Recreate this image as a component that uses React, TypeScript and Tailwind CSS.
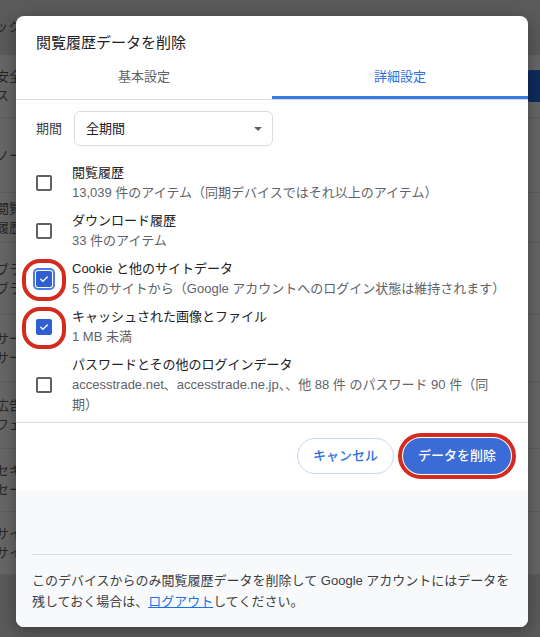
import type { ReactNode } from "react";

const BG_ROWS = [
  { h: "h-[63px]", lines: ["安全", "ス"], button: true },
  { h: "h-[75px]", lines: ["ノー"] },
  { h: "h-[50px]", lines: ["閲覧", "履歴"] },
  { h: "h-[72px]", lines: ["ブラ", "ブラ"] },
  { h: "h-[67px]", lines: ["サー", "サー"] },
  { h: "h-[67px]", lines: ["広告", "フェ"] },
  { h: "h-[63px]", lines: ["セキ", "セー"] },
  { h: "h-[63px]", lines: ["サイ", "サイ"] },
];

function BackgroundPage() {
  return (
    <div className="flex h-full flex-col">
      <div className="flex h-[55px] items-start pt-[17px]">
        <p className="-ml-[5px] text-[13px] leading-5 text-[#262626]">ックアップ</p>
      </div>
      <div className="flex flex-col bg-[#676767]">
        {BG_ROWS.map((row, i) => (
          <div
            key={i}
            className={`flex ${row.h} items-center justify-between border-b border-[#5e5e5e]`}
          >
            <div className="-ml-[4px] text-[13px] leading-[19px] text-[#262626]">
              {row.lines.map((l, j) => (
                <p key={j}>{l}</p>
              ))}
            </div>
            {row.button && <div className="-mr-[30px] h-8 w-[43px] rounded bg-[#0d2c5e]" />}
          </div>
        ))}
      </div>
    </div>
  );
}

function RedRing({ className }: { className: string }) {
  return <div className={`pointer-events-none absolute border-4 border-[#d52b1e] ${className}`} />;
}

function Checkbox({ checked, focused, marked }: { checked?: boolean; focused?: boolean; marked?: boolean }) {
  return (
    <div className="relative flex h-4 w-4 shrink-0">
      {checked ? (
        <div
          className={`flex h-4 w-4 items-center justify-center rounded-[2px] bg-[#2f5fd3] ${
            focused ? "ring-2 ring-[#4a7de4] ring-offset-1" : ""
          }`}
        >
          <svg width="12" height="12" viewBox="0 0 12 12" fill="none">
            <path d="M2.8 6.2l2.1 2.1L9.3 3.9" stroke="white" strokeWidth="1.4" strokeLinecap="round" strokeLinejoin="round" />
          </svg>
        </div>
      ) : (
        <div className="h-4 w-4 rounded-[2px] border-2 border-[#5f6368]" />
      )}
      {marked && <RedRing className="-inset-x-[14px] -top-[12px] -bottom-[14px] rounded-[18px]" />}
    </div>
  );
}

function Row({ title, children, checked, focused, marked }: { title: string; children: ReactNode; checked?: boolean; focused?: boolean; marked?: boolean }) {
  return (
    <div className="flex items-center gap-5 px-5 py-[4px]">
      <Checkbox checked={checked} focused={focused} marked={marked} />
      <div className="min-w-0">
        <p className="text-[13px] leading-5 text-[#202124]">{title}</p>
        <p className="text-[13px] leading-5 whitespace-nowrap text-[#5f6368]">{children}</p>
      </div>
    </div>
  );
}

function ClearDataDialog() {
  return (
    <div className="absolute left-4 top-4 flex h-[611px] w-[512px] flex-col overflow-hidden rounded-lg bg-white shadow-[0_4px_18px_rgba(0,0,0,0.35)]">
      <h1 className="px-5 pt-[17px] text-[15px] leading-5 text-[#202124]">閲覧履歴データを削除</h1>

      <div className="mt-[5px] flex border-b border-[#dadce0]">
        <div className="flex h-[41px] flex-1 items-center justify-center border-b-[3px] border-transparent text-[13px] text-[#5f6368]">
          基本設定
        </div>
        <div className="flex h-[41px] flex-1 items-center justify-center border-b-[3px] border-[#3b7be6] text-[13px] text-[#2f6fe0]">
          詳細設定
        </div>
      </div>

      <div className="mt-[11px] flex items-center gap-3 px-5">
        <span className="text-[13px] text-[#3c4043]">期間</span>
        <div className="flex h-[35px] w-[199px] items-center justify-between rounded-md border border-[#dadce0] pl-[11px] pr-[10px] text-[13px] text-[#202124]">
          全期間
          <svg width="8" height="4" viewBox="0 0 8 4">
            <path d="M0 0h8L4 4z" fill="#5f6368" />
          </svg>
        </div>
      </div>

      <div className="mt-[13px] flex flex-col pb-[3px]">
        <Row title="閲覧履歴">13,039 件のアイテム（同期デバイスではそれ以上のアイテム）</Row>
        <Row title="ダウンロード履歴">33 件のアイテム</Row>
        <Row title="Cookie と他のサイトデータ" checked focused marked>
          5 件のサイトから（Google アカウントへのログイン状態は維持されます）
        </Row>
        <Row title="キャッシュされた画像とファイル" checked marked>
          1 MB 未満
        </Row>
        <Row title="パスワードとその他のログインデータ">
          accesstrade.net、accesstrade.ne.jp、、他 88 件 のパスワード 90 件（同
          <br />
          期）
        </Row>
      </div>

      <div className="flex justify-end gap-[9px] border-t border-[#dadce0] pb-[17px] pl-5 pr-[17px] pt-[15px]">
        <button
          type="button"
          className="h-9 w-[97px] rounded-full border border-[#c6d6f3] text-[13px] font-medium text-[#2f6fe0]"
        >
          キャンセル
        </button>
        <div className="relative">
          <button
            type="button"
            className="h-9 w-[108px] rounded-full bg-[#3b6bd6] text-[13px] font-medium text-white"
          >
            データを削除
          </button>
          <RedRing className="-inset-x-[5px] -inset-y-[5px] rounded-full" />
        </div>
      </div>

      <div className="flex-1 bg-[#f8f9fa] px-4 pt-[63px]">
        <div className="border-t border-[#dadce0] pt-[15px] text-[13px] leading-[21px] text-[#3c4043]">
          このデバイスからのみ閲覧履歴データを削除して Google アカウントにはデータを残しておく場合は、
          <span className="text-[#1a73e8] underline">ログアウト</span>
          してください。
        </div>
      </div>
    </div>
  );
}

export default function App() {
  return (
    <div className="relative h-[637px] w-[540px] overflow-hidden bg-[#5b5b5b] font-['Liberation_Sans','Noto_Sans_CJK_JP',sans-serif]">
      <BackgroundPage />
      <ClearDataDialog />
    </div>
  );
}
